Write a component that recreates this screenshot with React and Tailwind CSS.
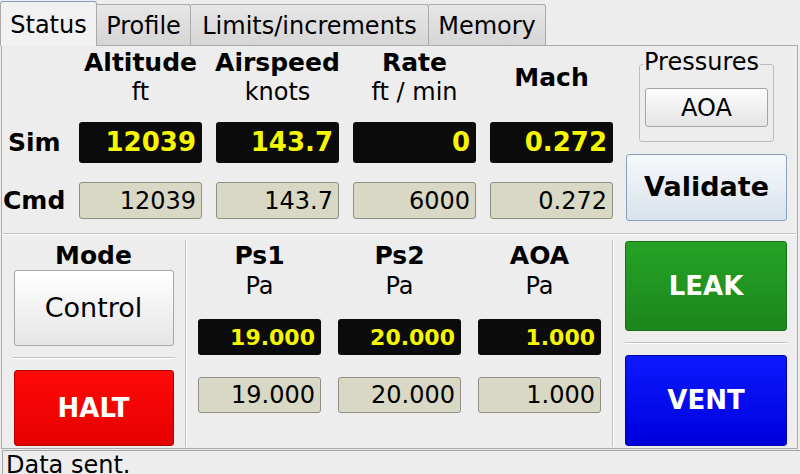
import React from "react";

const topCols = [
  { name: "Altitude", unit: "ft", sim: "12039", cmd: "12039" },
  { name: "Airspeed", unit: "knots", sim: "143.7", cmd: "143.7" },
  { name: "Rate", unit: "ft / min", sim: "0", cmd: "6000" },
  { name: "Mach", unit: null, sim: "0.272", cmd: "0.272" },
];

const pressures = [
  { name: "Ps1", sim: "19.000", cmd: "19.000" },
  { name: "Ps2", sim: "20.000", cmd: "20.000" },
  { name: "AOA", sim: "1.000", cmd: "1.000" },
];

const HLine = ({ className }) => (
  <div className={"h-0 border-t border-t-[#c2c2c2] border-b border-b-white " + className} />
);

const VLine = () => (
  <div className="w-0 mt-[5px] mb-[1px] border-l border-l-[#c2c2c2] border-r border-r-white" />
);

const tabs = [
  { label: "Profile", w: "w-[94px]" },
  { label: "Limits/increments", w: "w-[238px]" },
  { label: "Memory", w: "w-[117px]" },
];

export default function App() {
  return (
    <div className="w-[800px] h-[474px] bg-[#ededed] flex flex-col overflow-hidden font-['DejaVu_Sans',sans-serif] text-black">
      {/* tab bar */}
      <div className="h-[45px] flex items-end shrink-0 relative z-10">
        <div className="w-[97px] h-[45px] -mb-px bg-[#f1f1f1] border border-b-0 border-[#a9a9a9] border-t-[#7f9cc4] rounded-t-[3px] flex justify-center pt-[9px] text-[24px] leading-[28px]">
          Status
        </div>
        {tabs.map((t) => (
          <div
            key={t.label}
            className={
              t.w +
              " h-[41px] bg-gradient-to-b from-[#e7e7e7] to-[#d5d5d5] border-t border-r border-[#ababab] rounded-tr-[3px] flex justify-center pt-[7px] text-[24px] leading-[28px]"
            }
          >
            {t.label}
          </div>
        ))}
      </div>

      {/* panel */}
      <div className="ml-[1px] w-[797px] h-[404px] shrink-0 border border-[#ababab] flex flex-col">
        {/* top section */}
        <div className="h-[187px] flex">
          <div className="grid grid-cols-[63px_123px_123px_123px_123px] grid-rows-[76px_60px_37px] gap-x-[14px]">
            <div />
            {topCols.map((c) => (
              <div key={c.name} className="pt-[2px] h-[60px] flex flex-col items-center justify-center">
                <div className="text-[25px] leading-[29px] font-bold">{c.name}</div>
                {c.unit && <div className="mt-[1px] text-[24px] leading-[28px]">{c.unit}</div>}
              </div>
            ))}
            <div className="h-[41px] flex items-center pl-[6px] text-[25px] font-bold">Sim</div>
            {topCols.map((c) => (
              <div
                key={c.name}
                className="h-[41px] bg-[#0b0b0b] rounded-[3px] flex items-center justify-end pr-[6px] text-[26px] font-bold text-[#f6f600]"
              >
                {c.sim}
              </div>
            ))}
            <div className="h-[37px] flex items-center pl-[1px] text-[25px] font-bold">Cmd</div>
            {topCols.map((c) => (
              <div
                key={c.name}
                className="h-[37px] bg-[#d9d8c4] border border-[#8e8e82] rounded-[3px] flex items-center justify-end pr-[5px] text-[24px]"
              >
                {c.cmd}
              </div>
            ))}
          </div>

          <div className="ml-[13px] w-[161px] flex flex-col">
            <div className="relative mt-[18px] mx-auto w-[135px] h-[78px] border border-[#bdbdbd] rounded-[3px]">
              <div className="absolute top-[-17px] left-[3px] px-[1px] bg-[#ededed] text-[24px] leading-[28px]">
                Pressures
              </div>
              <button className="mt-[23px] ml-[5px] w-[123px] h-[39px] bg-gradient-to-b from-[#fdfdfd] to-[#e4e4e4] border border-[#a5a5a5] rounded-[3px] text-[24px] leading-[28px]">
                AOA
              </button>
            </div>
            <button className="mt-[12px] h-[67px] bg-gradient-to-b from-[#f6f9fc] to-[#d9e2eb] border border-[#8aa1bd] rounded-[3px] text-[27px] font-bold">
              Validate
            </button>
          </div>
        </div>

        <HLine className="mx-[1px]" />

        {/* bottom section */}
        <div className="flex-1 flex">
          <div className="w-[183px] flex flex-col items-center pt-[6px]">
            <div className="text-[25px] leading-[29px] font-bold">Mode</div>
            <button className="w-[160px] h-[76px] bg-gradient-to-b from-[#ffffff] to-[#e6e6e6] border border-[#a6a6a6] rounded-[3px] text-[27px]">
              Control
            </button>
            <HLine className="mt-[11px] w-[162px]" />
            <button className="mt-[11px] w-[160px] h-[76px] bg-gradient-to-b from-[#ff0a0a] to-[#e60000] border border-[#b40000] rounded-[3px] text-[26px] font-bold text-white">
              HALT
            </button>
          </div>

          <VLine />

          <div className="w-[425px] pl-[11px] flex gap-x-[17px] pt-[6px]">
            {pressures.map((p) => (
              <div key={p.name} className="w-[123px] flex flex-col">
                <div className="text-center text-[25px] leading-[29px] font-bold">{p.name}</div>
                <div className="mt-[2px] text-center text-[24px] leading-[28px]">Pa</div>
                <div className="mt-[19px] h-[36px] bg-[#0b0b0b] rounded-[3px] flex items-center justify-end pr-[6px] text-[22px] font-bold text-[#f6f600]">
                  {p.sim}
                </div>
                <div className="mt-[22px] h-[36px] bg-[#d9d8c4] border border-[#8e8e82] rounded-[3px] flex items-center justify-end pr-[5px] text-[24px]">
                  {p.cmd}
                </div>
              </div>
            ))}
          </div>

          <VLine />

          <div className="flex-1 pl-[11px] pt-[6px] flex flex-col">
            <button className="w-[162px] h-[90px] bg-gradient-to-b from-[#25a325] to-[#1c861c] border border-[#16701a] rounded-[3px] text-[26px] font-bold text-white">
              LEAK
            </button>
            <HLine className="mt-[11px] w-[162px]" />
            <button className="mt-[11px] w-[162px] h-[91px] bg-gradient-to-b from-[#0c18ff] to-[#0000dc] border border-[#0000a8] rounded-[3px] text-[26px] font-bold text-white">
              VENT
            </button>
          </div>
        </div>
      </div>

      {/* status bar */}
      <div className="h-[25px] shrink-0 pt-[1px] pl-[2px]">
        <div className="h-full border-l border-t border-[#a3a3a3] pl-[3px] text-[24px] leading-[28px]">
          Data sent.
        </div>
      </div>
    </div>
  );
}
